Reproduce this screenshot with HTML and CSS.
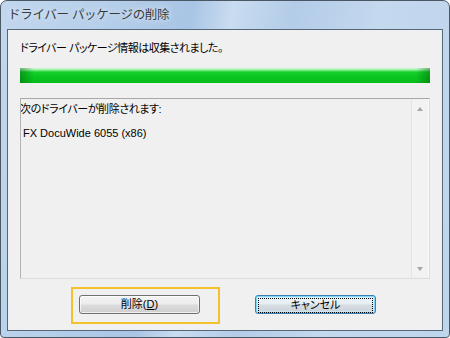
FILE: index.html
```html
<!DOCTYPE html>
<html lang="ja">
<head>
  <meta charset="UTF-8" />
  <title>ドライバー パッケージの削除</title>
  <link rel="stylesheet" href="styles.css">
</head>
<body>
  <div class="window">
    <div class="titlebar">ドライバー パッケージの削除</div>

    <div class="client">
      <p class="status">ドライバー パッケージ情報は収集されました。</p>

      <div class="progress">
        <div class="progress-fill"></div>
      </div>

      <div class="listbox">
        <div class="list-text">
          <div class="list-line first">次のドライバーが削除されます:</div>
          <div class="list-line latin">FX DocuWide 6055 (x86)</div>
        </div>
        <div class="scrollbar">
          <span class="arrow up"></span>
          <span class="arrow down"></span>
        </div>
      </div>

      <div class="buttons">
        <div class="highlight">
          <button class="btn">削除(<u>D</u>)</button>
        </div>
        <button class="btn default"><span class="focus">キャンセル</span></button>
      </div>
    </div>
  </div>
</body>
</html>
```

FILE: styles.css
```css
html, body {
  margin: 0;
  padding: 0;
  background: #ffffff;
}

body {
  font-family: "Liberation Sans", "Noto Sans CJK JP", sans-serif;
  font-size: 11px;
  color: #000;
}

/* window frame */
.window {
  width: 450px;
  height: 338px;
  box-sizing: border-box;
  border: 1px solid #4a5866;
  border-radius: 7px 7px 4px 4px;
  padding: 0 6px 6px 6px;
  background: linear-gradient(100deg, #c2d7ee 0%, #b6cfea 20%, #a9c5e5 38%, #c9dcf0 46%, #b3cce8 58%, #c4d8ee 75%, #bed5ec 100%);
  overflow: hidden;
}

.titlebar {
  height: 28px;
  line-height: 28px;
  padding-left: 1px;
  font-size: 12.5px;
  color: #3a3a3a;
  letter-spacing: -0.3px;
  text-shadow: 0 0 6px rgba(255, 255, 255, 0.9);
}

.client {
  border: 1px solid #55677a;
  background: #f0f0f0;
  height: 300px;
  padding: 0 12px;
}

.status {
  margin: 0;
  padding-top: 10px;
  height: 16px;
  line-height: 16px;
  letter-spacing: -0.5px;
  font-feature-settings: "palt";
}

/* progress bar */
.progress {
  margin-top: 12px;
  height: 15px;
  background: #e6e6e6;
}

.progress-fill {
  height: 100%;
  background:
    linear-gradient(to right, rgba(0, 90, 10, 0.45) 0, rgba(0, 90, 10, 0) 14px, rgba(0, 90, 10, 0) calc(100% - 14px), rgba(0, 90, 10, 0.45) 100%),
    linear-gradient(to bottom, #d6fadb 0, #8ff09b 2px, #14d02a 4px, #0ac51f 60%, #08bb1c 100%);
}

/* list */
.listbox {
  margin-top: 15px;
  height: 181px;
  box-sizing: border-box;
  border: 1px solid #dcdcdc;
  border-top-color: #a8a8a8;
  border-left-color: #b4b4b4;
  display: flex;
  overflow: hidden;
}

.list-text {
  flex: 1;
  padding: 2px 0 0 0;
  overflow: hidden;
}

.list-line {
  height: 24px;
  line-height: 16px;
  padding-left: 2px;
  letter-spacing: -0.4px;
  font-feature-settings: "palt";
  white-space: nowrap;
}

.list-line.first {
  padding-left: 0;
  margin-left: -1px;
}

.list-line.latin {
  letter-spacing: 0;
}

.scrollbar {
  width: 16px;
  border-left: 1px solid #e4e4e4;
  border-right: 1px solid #fafafa;
  background: #f2f2f2;
  display: flex;
  flex-direction: column;
  justify-content: space-between;
  align-items: center;
  padding: 8px 0 7px;
}

.arrow {
  width: 0;
  height: 0;
  border-left: 3px solid transparent;
  border-right: 3px solid transparent;
}

.arrow.up {
  border-bottom: 4px solid #a5a5a5;
}

.arrow.down {
  border-top: 4px solid #a5a5a5;
}

/* buttons */
.buttons {
  display: flex;
  align-items: flex-start;
  margin-top: 8px;
}

.highlight {
  margin-left: 51px;
  border: 2px solid #f4c02c;
  padding: 6px 18px 8px 6px;
}

.btn {
  display: block;
  width: 121px;
  height: 19px;
  padding: 0;
  margin: 0;
  font-family: inherit;
  font-size: 11px;
  line-height: 15px;
  color: #000;
  border: 1px solid #707070;
  border-radius: 3px;
  background: linear-gradient(to bottom, #f4f4f4 0, #ececec 48%, #dcdcdc 52%, #cfcfcf 100%);
  box-shadow: inset 0 0 0 1px rgba(255, 255, 255, 0.7);
  font-feature-settings: "palt";
}

.btn.default {
  margin-left: 35px;
  margin-top: 8px;
  border-color: #3c7fb1;
  box-shadow: inset 0 0 0 1px #7fd6f6, inset 0 0 0 2px rgba(210, 240, 252, 0.6);
  background: linear-gradient(to bottom, #eef4f8 0, #e6eef3 48%, #d6dde2 52%, #cbd3d8 100%);
  padding: 2px;
}

.focus {
  display: block;
  height: 13px;
  line-height: 13px;
  border: 1px dotted #000;
}
```
